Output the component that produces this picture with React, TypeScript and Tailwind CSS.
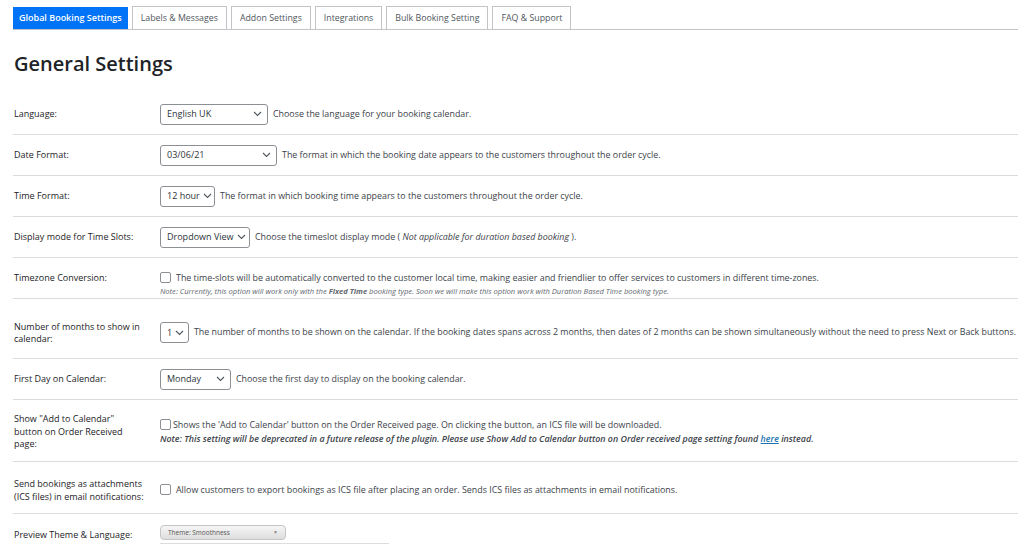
import React from "react";

const TABS = [
  "Global Booking Settings",
  "Labels & Messages",
  "Addon Settings",
  "Integrations",
  "Bulk Booking Setting",
  "FAQ & Support",
];

const Chevron = () => (
  <svg width="9" height="6" viewBox="0 0 9 6" className="shrink-0">
    <path d="M1 1l3.5 3.5L8 1" fill="none" stroke="#50575e" strokeWidth="1.1" />
  </svg>
);

const Select = ({ value, w }: { value: string; w: string }) => (
  <div
    className={`${w} flex h-[21px] shrink-0 items-center justify-between gap-[3px] whitespace-nowrap rounded-[3px] border border-[#8c8f94] bg-white pl-[6px] pr-[5px] text-[9px] text-[#2c3338]`}
  >
    <span>{value}</span>
    <Chevron />
  </div>
);

const Checkbox = () => (
  <span className="inline-block h-[11px] w-[11px] shrink-0 rounded-[2px] border border-[#8c8f94] bg-white" />
);

const Row = ({
  label,
  h,
  pt = "",
  cpt = "",
  children,
}: {
  label: React.ReactNode;
  h: string;
  pt?: string;
  cpt?: string;
  children: React.ReactNode;
}) => (
  <div className={`${h} ${pt} flex items-center border-b border-[#dcdcde]`}>
    <div className="w-[147px] shrink-0 pl-px pr-2 pt-px text-[9px] leading-[12.5px] text-[#1d2327]">
      {label}
    </div>
    <div className={`${cpt} flex min-w-0 flex-1 flex-col`}>{children}</div>
  </div>
);

export default function App() {
  return (
    <div
      className="h-[544px] w-[1018px] overflow-hidden bg-white pl-[13px] text-[#3c434a]"
      style={{ fontFamily: '"Open Sans", "Noto Sans", sans-serif' }}
    >
      <div className="flex h-[30px] items-end gap-[4px] border-b border-[#c3c4c7]">
        {TABS.map((t, i) => (
          <div
            key={t}
            className={
              i === 0
                ? "flex h-[22px] items-center bg-[#0073f7] px-[6px] text-[9px] font-semibold text-white"
                : "flex h-[23px] items-center border border-b-0 border-[#c3c4c7] bg-white px-[8px] pt-[1px] text-[8.8px] text-[#50575e]"
            }
          >
            {t}
          </div>
        ))}
      </div>

      <div className="flex h-[64px] items-center pl-px pt-[4px]">
        <h1 className="text-[20px] font-semibold text-[#1d2327]">General Settings</h1>
      </div>

      <Row label="Language:" h="h-[41px]">
        <div className="flex items-center gap-[5px] text-[8.9px]">
          <Select value="English UK" w="w-[108px]" />
          <span>Choose the language for your booking calendar.</span>
        </div>
      </Row>

      <Row label="Date Format:" h="h-[41px]">
        <div className="flex items-center gap-[5px] text-[8.9px]">
          <Select value="03/06/21" w="w-[117px]" />
          <span>The format in which the booking date appears to the customers throughout the order cycle.</span>
        </div>
      </Row>

      <Row label="Time Format:" h="h-[41px]">
        <div className="flex items-center gap-[5px] text-[8.9px]">
          <Select value="12 hour" w="w-[55px]" />
          <span>The format in which booking time appears to the customers throughout the order cycle.</span>
        </div>
      </Row>

      <Row label="Display mode for Time Slots:" h="h-[41px]">
        <div className="flex items-center gap-[5px] text-[8.9px]">
          <Select value="Dropdown View" w="w-[90px]" />
          <span>
            Choose the timeslot display mode ( <i>Not applicable for duration based booking</i> ).
          </span>
        </div>
      </Row>

      <Row label="Timezone Conversion:" h="h-[41px]" cpt="pt-[12px]">
        <div className="flex items-center gap-[5px] text-[8.9px]">
          <Checkbox />
          <span className="whitespace-nowrap">
            The time-slots will be automatically converted to the customer local time, making easier and friendlier to
            offer services to customers in different time-zones.
          </span>
        </div>
        <p className="mt-[2px] whitespace-nowrap text-[7.6px] italic text-[#646970]">
          Note: Currently, this option will work only with the <b>Fixed Time</b> booking type. Soon we will make this
          option work with Duration Based Time booking type.
        </p>
      </Row>

      <Row label={<>Number of months to show in<br />calendar:</>} h="h-[60px]" pt="pt-[8px]">
        <div className="flex items-center gap-[5px] text-[8.85px]">
          <Select value="1" w="w-[29px]" />
          <span className="whitespace-nowrap">
            The number of months to be shown on the calendar. If the booking dates spans across 2 months, then dates of 2
            months can be shown simultaneously without the need to press Next or Back buttons.
          </span>
        </div>
      </Row>

      <Row label="First Day on Calendar:" h="h-[41px]">
        <div className="flex items-center gap-[5px] text-[8.9px]">
          <Select value="Monday" w="w-[71px]" />
          <span>Choose the first day to display on the booking calendar.</span>
        </div>
      </Row>

      <Row
        label={<>Show "Add to Calendar"<br />button on Order Received<br />page:</>}
        h="h-[62px]"
        pt="pt-[2px]"
      >
        <div className="flex items-center gap-[2px] text-[8.9px]">
          <Checkbox />
          <span>
            Shows the 'Add to Calendar' button on the Order Received page. On clicking the button, an ICS file will be
            downloaded.
          </span>
        </div>
        <p className="mt-[1px] text-[8.9px] font-semibold italic text-[#3c434a]">
          Note: This setting will be deprecated in a future release of the plugin. Please use Show Add to Calendar button
          on Order received page setting found <a className="text-[#2271b1] underline">here</a> instead.
        </p>
      </Row>

      <Row label={<>Send bookings as attachments<br />(ICS files) in email notifications:</>} h="h-[52px]" pt="pt-[5px]">
        <div className="flex items-center gap-[5px] text-[8.9px]">
          <Checkbox />
          <span>
            Allow customers to export bookings as ICS file after placing an order. Sends ICS files as attachments in email
            notifications.
          </span>
        </div>
      </Row>

      <div className="flex h-[40px] items-start pt-[12px]">
        <div className="w-[147px] shrink-0 pl-px pt-[2px] text-[9px] text-[#1d2327]">Preview Theme &amp; Language:</div>
        <div className="flex flex-col">
          <div className="mt-[-1px] flex h-[15px] w-[126px] items-center justify-between rounded-[4px] border border-[#c5c5c5] bg-gradient-to-b from-[#f6f6f6] to-[#dedede] px-[7px] text-[6.5px] text-[#555]">
            <span>Theme: Smoothness</span>
            <span className="text-[5px] text-[#888]">▼</span>
          </div>
          <div className="mt-[3px] h-[10px] w-[229px] border border-[#ddd] bg-white" />
        </div>
      </div>
    </div>
  );
}
